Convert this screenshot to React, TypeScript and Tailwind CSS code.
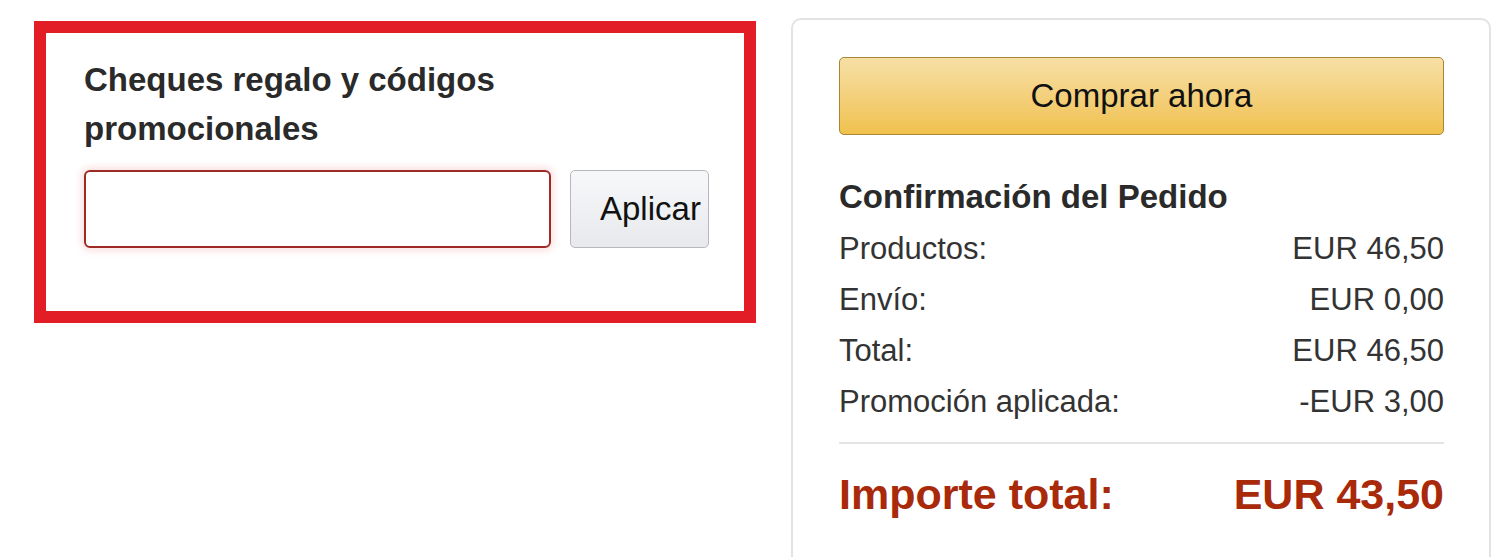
import React from "react";

const rows = [
  { label: "Productos:", value: "EUR 46,50" },
  { label: "Envío:", value: "EUR 0,00" },
  { label: "Total:", value: "EUR 46,50" },
  { label: "Promoción aplicada:", value: "-EUR 3,00" },
];

export default function App() {
  return (
    <div className="w-[1500px] h-[557px] overflow-hidden bg-white flex items-start font-['Liberation_Sans',Arial,sans-serif] text-[#111]">
      {/* promo code box */}
      <div className="ml-[34px] mt-[21px] w-[722px] h-[302px] border-[12px] border-[#e31d25] pl-[38px] pt-[22px]">
        <h2 className="text-[33px] font-bold leading-[49px] text-[#2a2a2a] w-[480px]">
          Cheques regalo y códigos promocionales
        </h2>
        <div className="flex items-center gap-[19px] mt-[17px]">
          <input
            type="text"
            className="w-[467px] h-[78px] rounded-[6px] border-2 border-[#9e2a24] shadow-[0_0_7px_3px_rgba(230,90,90,0.18)] outline-none px-3"
          />
          <button className="w-[139px] h-[78px] rounded-[5px] border border-[#b5b8bd] bg-gradient-to-b from-[#f7f8fa] to-[#e7e9ec] text-left pl-[29px] text-[33px] text-[#111] whitespace-nowrap overflow-hidden">
            Aplicar
          </button>
        </div>
      </div>

      {/* order summary */}
      <div className="ml-[35px] mt-[18px] w-[700px] h-[560px] rounded-[10px] border-2 border-[#e3e3e3] pl-[46px] pr-[46px] pt-[37px]">
        <button className="w-[605px] h-[78px] rounded-[5px] border border-[#a88734] bg-gradient-to-b from-[#f7dfa5] to-[#f0c14b] text-[33px] text-[#111]">
          Comprar ahora
        </button>
        <h3 className="mt-[42px] text-[33px] font-bold leading-[40px] text-[#2a2a2a]">
          Confirmación del Pedido
        </h3>
        <div className="mt-[7px] w-[605px]">
          {rows.map((r) => (
            <div key={r.label} className="flex justify-between h-[51px] items-center text-[31px] text-[#333]">
              <span>{r.label}</span>
              <span>{r.value}</span>
            </div>
          ))}
        </div>
        <div className="w-[605px] h-[2px] bg-[#e4e4e4] mt-[14px]" />
        <div className="w-[605px] flex justify-between items-center mt-[18px] text-[43px] font-bold text-[#a9290b]">
          <span>Importe total:</span>
          <span>EUR 43,50</span>
        </div>
      </div>
    </div>
  );
}
